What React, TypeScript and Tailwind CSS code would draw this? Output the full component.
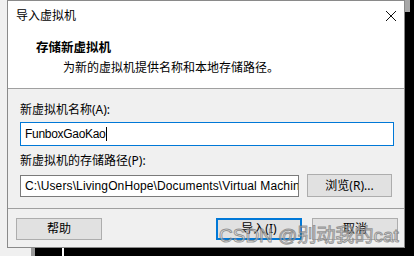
const font = {
  fontFamily: '"Segoe UI", "Noto Sans", "Noto Sans CJK SC", sans-serif',
};

const inputFont = {
  fontFamily: '"Liberation Sans", "Noto Sans CJK SC", sans-serif',
};

function WinButton({ label, primary }: { label: string; primary?: boolean }) {
  return (
    <div
      className={
        "w-[86px] h-[22px] flex items-center justify-center text-[12px] text-black bg-[#e1e1e1] " +
        (primary ? "border-2 border-[#0078d7]" : "border border-[#adadad]")
      }
    >
      {label}
    </div>
  );
}

export default function App() {
  return (
    <div className="relative w-[414px] h-[256px] bg-black overflow-hidden" style={font}>
      {/* desktop behind the dialog */}
      <div className="absolute inset-0 flex">
        <div className="w-[31px] h-full bg-[#f0f0f0]" />
        <div className="w-[4px] h-full bg-[#9a9a9a]" />
        <div className="w-[27px] h-full bg-black" />
        <div className="w-[2px] h-full bg-white" />
        <div className="flex-1 h-full bg-black" />
      </div>
      <div className="absolute left-[405px] top-0 w-[5px] h-[12px] bg-[#a8a8a8]" />

      {/* dialog */}
      <div className="relative ml-[7px] w-[398px] h-[248px] border border-[#8a8a8a] bg-[#f0f0f0] flex flex-col">
        <div className="h-[88px] bg-white border-b border-[#a0a0a0] flex flex-col">
          <div className="h-[30px] flex items-center justify-between pl-[8px] pr-[6px]">
            <span className="text-[12px] text-black">导入虚拟机</span>
            <svg width="12" height="12" viewBox="0 0 12 12" className="mr-[1px]">
              <path d="M1 1 L11 11 M11 1 L1 11" stroke="#111" strokeWidth="1" />
            </svg>
          </div>
          <div className="pl-[28px] mt-[10px] text-[12.5px] font-bold text-black leading-[14px]">
            存储新虚拟机
          </div>
          <div className="pl-[55px] mt-[6px] text-[12px] text-black leading-[14px]">
            为新的虚拟机提供名称和本地存储路径。
          </div>
        </div>

        <div className="flex flex-col pl-[12px] pr-[10px] pt-[13px]">
          <div className="text-[12px] leading-[16px] text-black">新虚拟机名称(A):</div>
          <div
            className="mt-[4px] h-[24px] border border-[#0078d7] bg-white flex items-center pl-[4px] text-[12px] text-black tracking-[-0.3px]"
            style={inputFont}
          >
            FunboxGaoKao
            <span className="ml-[1px] w-[1px] h-[14px] bg-black" />
          </div>
          <div className="mt-[7px] text-[12px] leading-[16px] text-black">新虚拟机的存储路径(P):</div>
          <div className="mt-[5px] flex items-center gap-[8px]">
            <div
              className="w-[279px] h-[22px] border border-[#7a7a7a] bg-white flex items-center pl-[4px] overflow-hidden whitespace-nowrap text-[12px] text-black tracking-[0.12px]"
              style={inputFont}
            >
              C:\Users\LivingOnHope\Documents\Virtual Machines\FunboxGaoKao
            </div>
            <div className="w-[85px] h-[23px] border border-[#adadad] bg-[#e1e1e1] flex items-center justify-center text-[12px] text-black">
              浏览(R)...
            </div>
          </div>
        </div>

        <div className="mt-[11px] border-t border-[#a0a0a0]" />

        <div className="flex items-center pt-[9px] pl-[8px] pr-[6px]">
          <WinButton label="帮助" />
          <div className="flex-1" />
          <WinButton label="导入(I)" primary />
          <div className="w-[10px]" />
          <WinButton label="取消" />
        </div>
      </div>

      {/* watermark */}
      <div
        className="absolute left-[219px] top-[223px] text-[19px] leading-[26px] text-white/50 [-webkit-text-stroke:1px_rgba(110,110,110,0.7)] whitespace-nowrap"
        style={inputFont}
      >
        CSDN @别动我的cat
      </div>
    </div>
  );
}
